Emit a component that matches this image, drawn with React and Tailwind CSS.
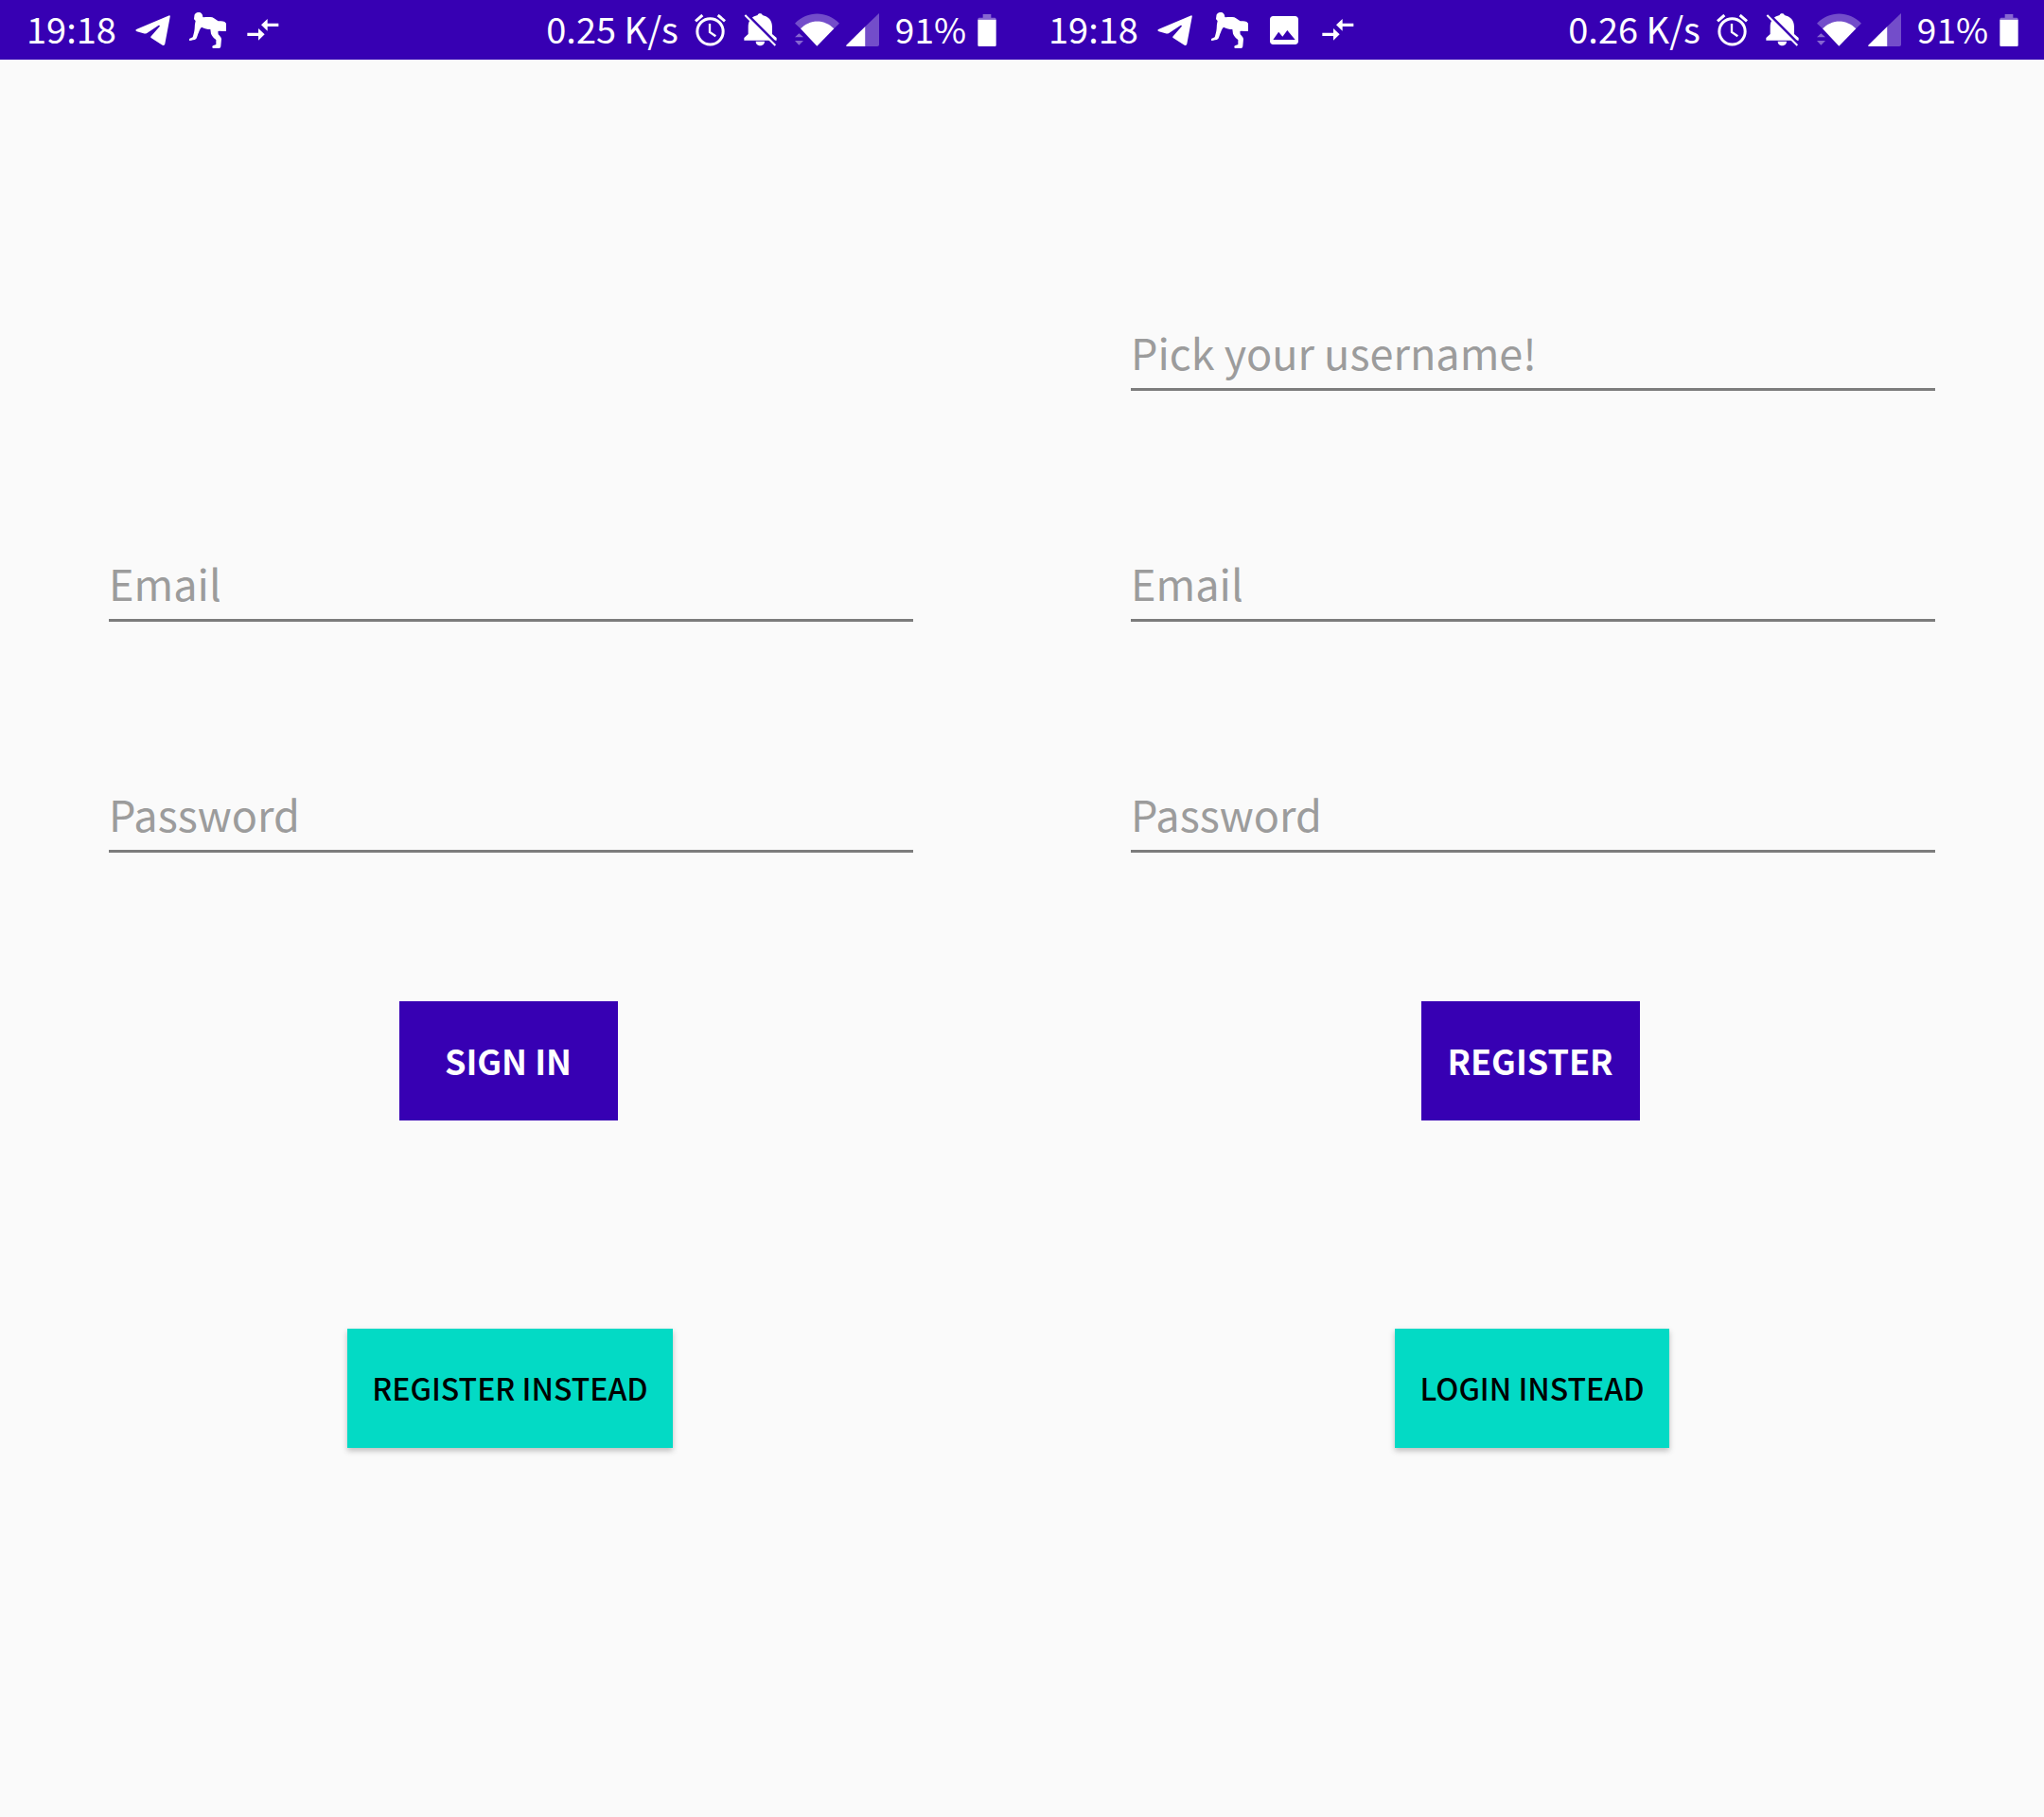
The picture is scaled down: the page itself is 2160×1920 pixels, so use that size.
import React from "react";

const TelegramIcon = () => (
  <svg className="h-[32px] w-[37px] shrink-0" viewBox="428 52 111 96" fill="#fff" aria-hidden="true">
    <path d="M536 53c2 0 3 2 2 5l-16 85c-1 4-4 6-8 4l-35-22c-3-2-3-4-1-6l27-31c2-3-1-5-4-3l-36 24c-4 2-7 2-11 1l-21-6c-5-2-5-6 0-8z" />
  </svg>
);

const CrawlIcon = () => (
  <svg className="h-[38px] w-[39px] shrink-0" viewBox="27 24 117 114" fill="#fff" aria-hidden="true">
    <path d="M57 24c8 0 13 6 13 15l2 1c10-1 20-1 28 0 8 3 12 9 19 12 7 0 14-1 20 2l5 5v25h-10l-12-1-4 2 1 9c5 5 9 9 10 15l-2 22c0 5-3 7-8 7l-14 0c-7 0-6-8-1-9l8-3 0-15c-7-5-13-12-16-19l-2-14c-9 0-19-3-28-7-6 6-7 12-9 17-4 7-4 14-8 20-6 5-14 4-21 6-3-1-4-4-1-6l11-5c3-9 5-17 6-27 0-9 1-17 3-25-5-3-6-8-4-12-1-9 5-15 14-15z" />
  </svg>
);

const ImageIcon = () => (
  <svg className="mx-[3px] h-[30px] w-[30px] shrink-0" viewBox="3 3 18 18" fill="#fff" aria-hidden="true">
    <path d="M21 19V5c0-1.100-.9-2-2-2H5c-1.100 0-2 .9-2 2v14c0 1.100.9 2 2 2h14c1.100 0 2-.9 2-2zM8.500 13l2.500 3.010L14 12l5 6H5l3.500-5z" />
  </svg>
);

const ArrowsIcon = () => (
  <svg className="ml-[2px] h-[23px] w-[34px] shrink-0" viewBox="781 61 102 69" fill="#fff" aria-hidden="true">
    <path d="M826 80l20-19v14h35v10h-35v14zM837 110l-20 19v-14h-35v-10h35V91z" />
  </svg>
);

const AlarmIcon = () => (
  <svg className="h-[34px] w-[33px] shrink-0" viewBox="519 44 99 102" fill="none" stroke="#fff" aria-hidden="true">
    <circle cx="568.500" cy="99" r="41" strokeWidth="9" />
    <path d="M567 74v27l19 13" strokeWidth="7" />
    <path d="M522 66l22-19M615 66l-22-19" strokeWidth="9" />
  </svg>
);

const BellOffIcon = () => (
  <svg className="h-[35px] w-[35px] shrink-0" viewBox="674 40 105 105" fill="#fff" aria-hidden="true">
    <path d="M718 46c0-7 15-7 15 0 19 4 31 16 31 38v22l14 12v8H675v-8l13-12V84c0-22 11-34 30-38zM712 129h28c0 18-28 18-28 0z" />
    <path d="M683 42l97 97" stroke="#3700b3" strokeWidth="8" />
    <path d="M678 46l96 96" stroke="#fff" strokeWidth="6" />
  </svg>
);

const WifiIcon = () => (
  <svg className="h-[35px] w-[47px] shrink-0" viewBox="57 42 141 105" fill="#fff" aria-hidden="true">
    <path opacity=".3" d="M57 74C97 33 158 33 198 74l-17 17C150 60 106 60 75 91z" />
    <path d="M75 91C106 60 150 60 181 91l-54 55z" />
    <path opacity=".4" d="M57 118l13-12 14 12zM57 129h27l-14 14z" />
  </svg>
);

const SignalIcon = () => (
  <svg className="h-[35px] w-[35px] shrink-0" viewBox="218 41 105 105" fill="#fff" aria-hidden="true">
    <path opacity=".3" d="M279 83l44-42v99c0 4-2 6-6 6h-38z" />
    <path d="M279 83v63h-60v-4z" />
  </svg>
);

const BatteryIcon = () => (
  <svg className="h-[34px] w-[20px] shrink-0" viewBox="638 42 60 102" fill="#fff" aria-hidden="true">
    <path opacity=".4" d="M655 42h26v11h12c2 0 4 2 4 6H639c0-4 2-6 4-6h12z" />
    <path d="M639 59h58v81c0 2-2 4-4 4h-50c-2 0-4-2-4-4z" />
  </svg>
);

function StatusBar({ speed, hasImage }) {
  return (
    <header className="flex h-[63px] items-center justify-between bg-[#3700b3] pl-[28px] pr-[27px] text-[38px] leading-[40px] text-white">
      <div className="flex items-center gap-[20px]">
        <time className="pb-[4px]">19:18</time>
        <TelegramIcon />
        <CrawlIcon />
        {hasImage && <ImageIcon />}
        <ArrowsIcon />
      </div>
      <div className="flex items-center">
        <span className="pb-[4px]">{speed} K/s</span>
        <div className="mx-[17px] flex items-center gap-[19px]">
          <AlarmIcon />
          <BellOffIcon />
          <div className="flex items-center gap-[7px]">
            <WifiIcon />
            <SignalIcon />
          </div>
        </div>
        <span className="mr-[12px] pb-[4px] text-[37px]">91%</span>
        <BatteryIcon />
      </div>
    </header>
  );
}

function Field({ label, type }) {
  return (
    <input
      type={type}
      aria-label={label}
      placeholder={label}
      className="h-[88px] w-full rounded-none border-b-3 border-[#7c7c7c] bg-transparent pt-[8px] text-[45px] leading-[68px] text-black outline-none placeholder:text-[#9c9c9c] placeholder:opacity-100"
    />
  );
}

function Screen({ speed, hasImage, withUsername, action, alternate }) {
  return (
    <section className="flex min-w-0 flex-col">
      <StatusBar speed={speed} hasImage={hasImage} />
      <form className="flex flex-col items-center px-[115px] pt-[262px]" onSubmit={(e) => e.preventDefault()}>
        <div className="flex w-full flex-col gap-[156px]">
          {withUsername ? <Field label="Pick your username!" type="text" /> : <div className="h-[88px]" />}
          <Field label="Email" type="email" />
          <Field label="Password" type="password" />
        </div>
        <button type="submit" className="mr-[6px] mt-[157px] h-[126px] w-[231px] bg-[#3700b3] pb-[2px] text-[36px] font-bold text-white">
          {action}
        </button>
        <button
          type="button"
          className="mr-[2px] mt-[220px] h-[126px] bg-[#03dac5] px-[26px] pb-[2px] text-[32px] font-medium whitespace-nowrap text-black shadow-[0_3px_6px_rgba(0,0,0,0.25)]"
        >
          {alternate}
        </button>
      </form>
    </section>
  );
}

export default function App() {
  return (
    <main className="grid min-h-screen grid-cols-2 bg-[#fafafa] font-['Noto_Sans_CJK_SC','Noto_Sans',sans-serif]">
      <Screen speed="0.25" action="SIGN IN" alternate="REGISTER INSTEAD" />
      <Screen speed="0.26" hasImage withUsername action="REGISTER" alternate="LOGIN INSTEAD" />
    </main>
  );
}
